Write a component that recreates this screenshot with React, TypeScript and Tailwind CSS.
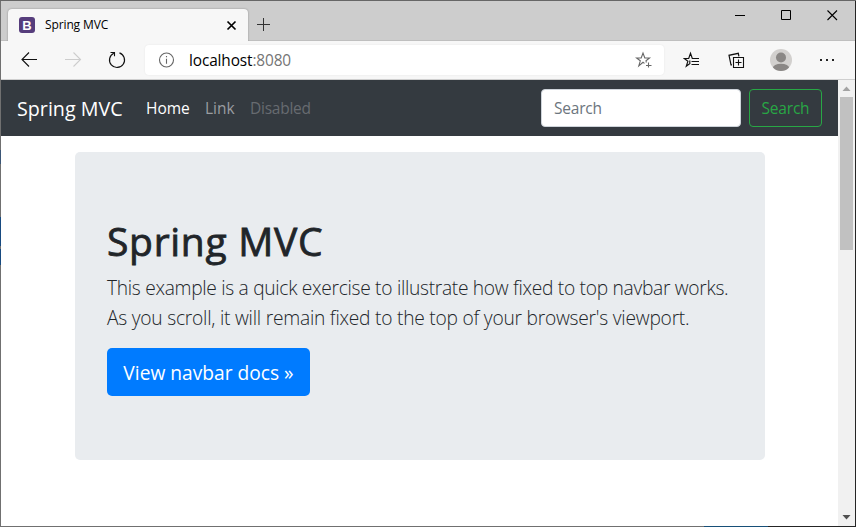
import type { ReactNode } from "react";

function Icon({ w, h, className = "", children }: { w: number; h: number; className?: string; children: ReactNode }) {
  return (
    <svg width={w} height={h} viewBox={`0 0 ${w} ${h}`} fill="none" stroke="currentColor" strokeWidth="1.1" className={`shrink-0 ${className}`}>
      {children}
    </svg>
  );
}

function TitleBar() {
  return (
    <div className="flex h-10 shrink-0 border-b border-[#bfbfbf] bg-[#cdcdcd] text-black">
      <div className="relative z-10 ml-[7px] mt-2 flex h-8 w-[240px] shrink-0 items-center rounded-t bg-[#f7f7f7] pl-[11px] pr-[11px] shadow-[0_0_2px_rgba(0,0,0,0.35)] [clip-path:inset(-3px_-3px_0_-3px)]">
        <div className="flex size-4 items-center justify-center rounded-[3px] bg-[#563d7c] font-['Liberation_Sans'] text-[13px] font-bold leading-none text-white">B</div>
        <span className="ml-[10px] whitespace-nowrap text-[12px] tracking-[-0.12px]">Spring MVC</span>
        <Icon w={11} h={11} className="ml-auto">
          <path d="M1.5 1.5l8 8M9.5 1.5l-8 8" strokeWidth="1.7" />
        </Icon>
      </div>
      <Icon w={15} h={15} className="ml-2 mt-4 text-[#333]">
        <path d="M1 7.5h13M7.5 1v13" strokeWidth="1" />
      </Icon>
      <div className="ml-auto flex pt-[8px]">
        <Icon w={46} h={13}><path d="M18 6.5h10" strokeWidth="1" /></Icon>
        <Icon w={46} h={13}><path d="M18.500 1.500h9v9h-9z" strokeWidth="1" /></Icon>
        <Icon w={46} h={13}><path d="M18.500 1.500l9.500 9.500M28 1.500l-9.500 9.500" /></Icon>
      </div>
    </div>
  );
}

function Toolbar() {
  return (
    <div className="flex h-[39px] shrink-0 items-center border-b border-[#cfcfcf] bg-[#f7f7f7] text-[#111]">
      <Icon w={18} h={18} className="ml-[19px]"><path d="M17 8.500H1.500M9 1.500l-7 7 7 7" /></Icon>
      <Icon w={18} h={18} className="ml-[26px] text-[#cdcdcd]"><path d="M1 8.500h15.500M9.500 1.500l7 7-7 7" /></Icon>
      <Icon w={18} h={18} className="ml-[26px]">
        <path d="M11.500 1.900A7.500 7.500 0 1 1 5.800 2.200" strokeWidth="1.2" />
        <path d="M2.500 1.500h4v3.700" strokeWidth="1.1" />
      </Icon>
      <div className="ml-[19px] flex h-[30px] w-[519px] shrink-0 items-center rounded bg-white pl-[13px] pr-[11px] shadow-[0_0_2px_rgba(0,0,0,0.08)]">
        <Icon w={17} h={17} className="text-[#666]">
          <circle cx="8.500" cy="8" r="7" />
          <path d="M8.500 6.800v5M8.500 4v1.300" />
        </Icon>
        <span className="ml-[14px] whitespace-nowrap pt-0.5 text-[15.400px] tracking-[-0.12px] text-black">
          localhost<span className="text-[#757575]">:8080</span>
        </span>
        <Icon w={18} h={18} className="ml-auto text-[#666]">
          <path d="M9.500 12.400L8 11.300 3.800 14.800l1.500-5L1.500 7h4.700L8 2l1.800 5h4.700L11 9.800l.4 1.700M13.500 11.500v5M11 14.500h5.500" />
        </Icon>
      </div>
      <Icon w={18} h={18} className="ml-[19px]">
        <path d="M7.300 12.200L3.300 15.200l1.600-5L1.300 7.500h4.400L7.500 2.200l1.800 5.300H16M8.500 10.500H16M8.500 13.500h7.500M6.800 9.500v2.500" strokeWidth="1.150" />
      </Icon>
      <Icon w={18} h={18} className="ml-[27px]">
        <path d="M4 13.800H3L1 4.300l9.300-2 .6 3" strokeWidth="1.200" />
        <path d="M5.500 6.500h10v10h-10zM10.500 8.500v6M7.500 11.500h6" strokeWidth="1.100" />
      </Icon>
      <svg width="22" height="22" viewBox="0 0 22 22" className="ml-[24px] shrink-0">
        <clipPath id="avatar"><circle cx="11" cy="11" r="11" /></clipPath>
        <circle cx="11" cy="11" r="11" fill="#d2d0ce" />
        <g clipPath="url(#avatar)" fill="#8a8785">
          <circle cx="11" cy="8.500" r="5" />
          <ellipse cx="11" cy="19" rx="8.300" ry="4.300" />
        </g>
      </svg>
      <svg width="16" height="4" viewBox="0 0 16 4" className="ml-[27px] shrink-0 fill-[#222]">
        <path d="M1 1h2v2H1zM7 1h2v2H7zM13 1h2v2h-2z" />
      </svg>
    </div>
  );
}

function Navbar() {
  return (
    <nav className="flex h-14 shrink-0 items-center bg-[#343a40] px-4 text-[15.500px]">
      <span className="w-[129px] shrink-0 whitespace-nowrap pt-0.5 text-[19.700px] text-white">Spring MVC</span>
      <div className="flex pt-px">
        <span className="w-[59px] text-white">Home</span>
        <span className="w-[45px] text-[#9a9da0]">Link</span>
        <span className="tracking-[-0.25px] text-[#676b70]">Disabled</span>
      </div>
      <div className="ml-auto flex gap-2">
        <input className="h-[38px] w-[200px] rounded border border-[#ced4da] bg-white px-3 tracking-[-0.2px] placeholder:text-[#6c757d]" placeholder="Search" />
        <button className="h-[38px] w-[73px] rounded border border-[#28a745] pt-px tracking-[-0.2px] text-[#28a745]">Search</button>
      </div>
    </nav>
  );
}

function Jumbotron() {
  return (
    <main className="ml-[74px] mt-4 h-[308px] w-[690px] rounded-[5px] bg-[#e9ecef] px-8 pt-16 text-[#212529]">
      <h1 className="mb-2 h-12 whitespace-nowrap text-[39px] font-medium leading-[50px] tracking-[0.7px] [-webkit-text-stroke:0.8px_#212529]">Spring MVC</h1>
      <p className="whitespace-nowrap pb-[15px] pt-px text-[19.200px] font-light leading-[30px]">
        <span className="block tracking-[-0.3px]">This example is a quick exercise to illustrate how fixed to top navbar works.</span>
        <span className="block tracking-[-0.23px]">As you scroll, it will remain fixed to the top of your browser's viewport.</span>
      </p>
      <button className="h-12 w-[203px] whitespace-nowrap rounded-[5px] bg-[#007bff] pt-0.5 text-[19.200px] text-white">View navbar docs »</button>
    </main>
  );
}

function Scrollbar() {
  return (
    <div className="flex w-[17px] shrink-0 flex-col items-center bg-[#f1f1f1]">
      <svg width="17" height="17" viewBox="0 0 17 17"><path d="M4.500 11l4-4.500 4 4.500z" fill="#a3a3a3" /></svg>
      <div className="h-[153px] w-[13px] bg-[#c1c1c1]" />
      <svg width="17" height="17" viewBox="0 0 17 17" className="mt-auto"><path d="M4.500 6l4 4.500 4-4.500z" fill="#505050" /></svg>
    </div>
  );
}

export default function App() {
  return (
    <div className="flex h-[527px] w-[856px] flex-col overflow-hidden bg-white font-['Open_Sans','Noto_Sans',sans-serif]">
      <div className="h-px shrink-0 bg-[#666]" />
      <div className="flex h-[525px] shrink-0">
        <div className="flex w-px shrink-0 flex-col bg-[#707070]">
          <div className="mt-[149px] h-[14px] bg-[#3b5676]" />
          <div className="mt-[53px] h-[29px] bg-[#174a80]" />
          <div className="mt-[3px] h-[16px] bg-[#174a80]" />
        </div>
        <div className="flex w-[854px] shrink-0 flex-col">
          <TitleBar />
          <Toolbar />
          <div className="flex flex-1">
            <div className="flex w-[837px] shrink-0 flex-col">
              <Navbar />
              <Jumbotron />
            </div>
            <Scrollbar />
          </div>
        </div>
        <div className="w-px shrink-0 bg-[#252525]" />
      </div>
      <div className="flex h-px shrink-0 bg-[#252525]">
        <div className="w-[704px] bg-[#707070]" />
        <div className="w-16 bg-[#174f78]" />
      </div>
    </div>
  );
}
